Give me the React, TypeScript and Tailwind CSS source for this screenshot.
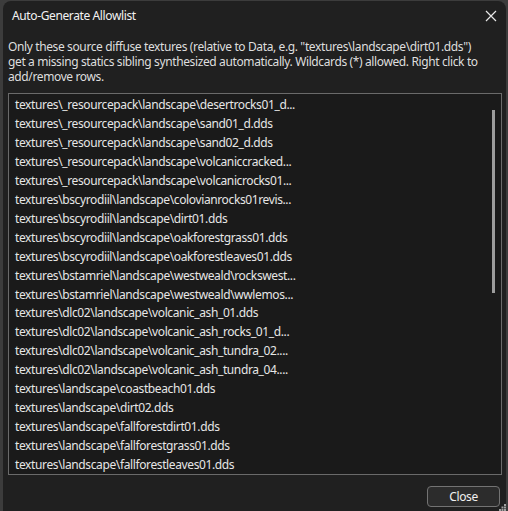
import React from "react";

const rows = [
  "textures\\_resourcepack\\landscape\\desertrocks01_d...",
  "textures\\_resourcepack\\landscape\\sand01_d.dds",
  "textures\\_resourcepack\\landscape\\sand02_d.dds",
  "textures\\_resourcepack\\landscape\\volcaniccracked...",
  "textures\\_resourcepack\\landscape\\volcanicrocks01...",
  "textures\\bscyrodiil\\landscape\\colovianrocks01revis...",
  "textures\\bscyrodiil\\landscape\\dirt01.dds",
  "textures\\bscyrodiil\\landscape\\oakforestgrass01.dds",
  "textures\\bscyrodiil\\landscape\\oakforestleaves01.dds",
  "textures\\bstamriel\\landscape\\westweald\\rockswest...",
  "textures\\bstamriel\\landscape\\westweald\\wwlemos...",
  "textures\\dlc02\\landscape\\volcanic_ash_01.dds",
  "textures\\dlc02\\landscape\\volcanic_ash_rocks_01_d...",
  "textures\\dlc02\\landscape\\volcanic_ash_tundra_02....",
  "textures\\dlc02\\landscape\\volcanic_ash_tundra_04....",
  "textures\\landscape\\coastbeach01.dds",
  "textures\\landscape\\dirt02.dds",
  "textures\\landscape\\fallforestdirt01.dds",
  "textures\\landscape\\fallforestgrass01.dds",
  "textures\\landscape\\fallforestleaves01.dds",
];

function CloseIcon() {
  return (
    <svg width="12" height="12" viewBox="0 0 12 12" fill="none">
      <path d="M1 1L11 11M11 1L1 11" stroke="#e8e8e8" strokeWidth="1.2" />
    </svg>
  );
}

// little dotted resize grip in the corner
function Grip() {
  return (
    <svg width="7" height="7" viewBox="0 0 7 7" fill="#a0a0a0">
      <rect x="5" y="0" width="2" height="2" />
      <rect x="2.5" y="2.5" width="2" height="2" />
      <rect x="5" y="2.5" width="2" height="2" />
      <rect x="0" y="5" width="2" height="2" />
      <rect x="2.5" y="5" width="2" height="2" />
      <rect x="5" y="5" width="2" height="2" />
    </svg>
  );
}

export default function App() {
  return (
    <div
      className="w-[508px] h-[511px] bg-[#3c3c3c] pl-[3px] pt-[1px] pr-[2px] overflow-hidden tracking-[-0.38px]"
      style={{ fontFamily: '"Segoe UI", "Noto Sans", "Liberation Sans", sans-serif' }}
    >
      <div className="relative h-[510px] flex flex-col bg-[#202020] rounded-t-[8px] text-[12px] text-[#e4e4e4]">
        {/* title bar */}
        <div className="h-[30px] flex items-center justify-between pl-[9px] pr-[9px]">
          <span className="text-[12px] text-[#f2f2f2]">Auto-Generate Allowlist</span>
          <CloseIcon />
        </div>

        <div className="px-[5px] pt-[8px] flex flex-col text-[#dedede] whitespace-nowrap">
          <span className="h-[15px] leading-[15px]">
            Only these source diffuse textures (relative to Data, e.g. "textures\landscape\dirt01.dds")
          </span>
          <span className="h-[15px] leading-[15px]">
            get a missing statics sibling synthesized automatically. Wildcards (*) allowed. Right click to
          </span>
          <span className="h-[15px] leading-[15px]">add/remove rows.</span>
        </div>

        {/* allowlist rows */}
        <div className="mt-[9px] ml-[5px] w-[494px] h-[382px] flex border border-[#6a6a6a] bg-[#1a1a1a]">
          <div className="flex-1 flex flex-col pt-[2px] pl-[6px] overflow-hidden">
            {rows.map((r) => (
              <div key={r} className="h-[19px] flex items-center whitespace-nowrap text-[#e6e6e6]">
                {r}
              </div>
            ))}
          </div>
          <div className="w-[14px] pt-[16px] pl-[5px]">
            <div className="w-[3px] h-[183px] bg-[#9c9c9c]" />
          </div>
        </div>

        <div className="flex-1 flex items-start justify-end pt-[11px] pr-[6px]">
          <button className="w-[73px] h-[21px] rounded-[4px] border border-[#737373] bg-[#2c2c2c] text-[12px] text-[#f0f0f0]">
            Close
          </button>
        </div>

        <div className="absolute right-0 bottom-0">
          <Grip />
        </div>
      </div>
    </div>
  );
}
